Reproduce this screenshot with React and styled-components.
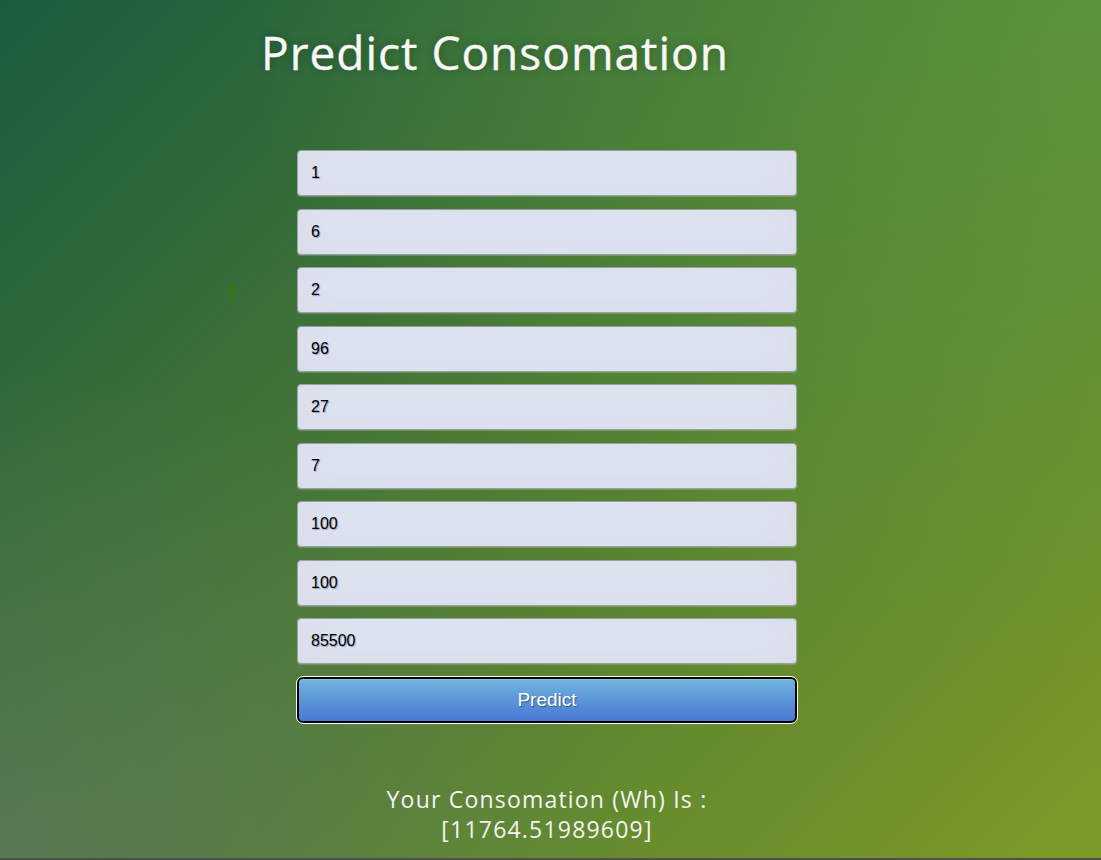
import React from "react";
import styled, { createGlobalStyle } from "styled-components";

const GlobalStyle = createGlobalStyle`
  html {
    background: #4f4f4f;
  }
  body {
    margin: 0;
    font-family: "Open Sans", "Liberation Sans", sans-serif;
  }
`;

const Page = styled.div`
  position: relative;
  height: 858px;
  overflow: hidden;
  background:
    radial-gradient(ellipse at 0% 100%, rgba(100, 120, 110, 0.55) 0%, rgba(100, 120, 110, 0) 40%),
    radial-gradient(ellipse at 100% 0%, rgba(100, 170, 70, 0.45) 0%, rgba(100, 170, 70, 0) 55%),
    linear-gradient(135deg, #1a5c3f 0%, #4a7a34 45%, #7d9b28 100%);
`;

const Title = styled.h1`
  margin: 0;
  padding: 24px 0 0 261px;
  font-size: 46px;
  font-weight: 400;
  line-height: 56px;
  color: #f7f7f7;
  letter-spacing: 1px;
  -webkit-text-stroke: 0.4px #f7f7f7;
  text-shadow: 0 0 10px rgba(0, 0, 0, 0.3);
`;

const Form = styled.form`
  width: 500px;
  margin: 70px 0 0 297px;
  display: flex;
  flex-direction: column;
  gap: 12.5px;
`;

const Field = styled.input`
  box-sizing: border-box;
  width: 100%;
  height: 46px;
  margin: 0;
  padding: 0 13px;
  border: 1px solid #9a9fa6;
  border-radius: 4px;
  background: #e1e6f3;
  box-shadow: inset 0 -5px 45px rgba(100, 100, 100, 0.08), 0 1px 1px rgba(255, 255, 255, 0.2);
  font-family: "Liberation Sans", Arial, sans-serif;
  font-size: 16px;
  color: #000;
  text-shadow: 1px 1px 1px rgba(0, 40, 120, 0.35);
  outline: none;
`;

const Button = styled.button`
  box-sizing: border-box;
  width: 100%;
  height: 46px;
  margin: 0;
  border: 2px solid #000;
  border-radius: 6px;
  outline: 1px solid #fff;
  background: linear-gradient(to bottom, #6eb6de, #4a77d4);
  box-shadow: inset 0 1px 0 rgba(255, 255, 255, 0.2);
  font-family: "Liberation Sans", Arial, sans-serif;
  font-size: 19px;
  color: #fff;
  text-shadow: 1px 1px 1px rgba(0, 0, 0, 0.4);
  cursor: pointer;
`;

const Marker = styled.span`
  position: absolute;
  left: 229px;
  top: 284px;
  width: 4px;
  height: 16px;
  background: #2f7a12;
`;

const Result = styled.p`
  margin: 61px 0 0 297px;
  width: 500px;
  text-align: center;
  font-size: 23px;
  line-height: 30px;
  color: #f4f4f4;
  letter-spacing: 1.2px;
`;

const values = ["1", "6", "2", "96", "27", "7", "100", "100", "85500"];

export default function App() {
  return (
    <>
      <GlobalStyle />
      <Page>
        <Title>Predict Consomation</Title>
        <Marker />
        <Form onSubmit={(e) => e.preventDefault()}>
          {values.map((v, i) => (
            <Field key={i} type="text" defaultValue={v} />
          ))}
          <Button type="submit">Predict</Button>
        </Form>
        <Result>
          Your Consomation (Wh) Is :
          <br />
          [11764.51989609]
        </Result>
      </Page>
    </>
  );
}
